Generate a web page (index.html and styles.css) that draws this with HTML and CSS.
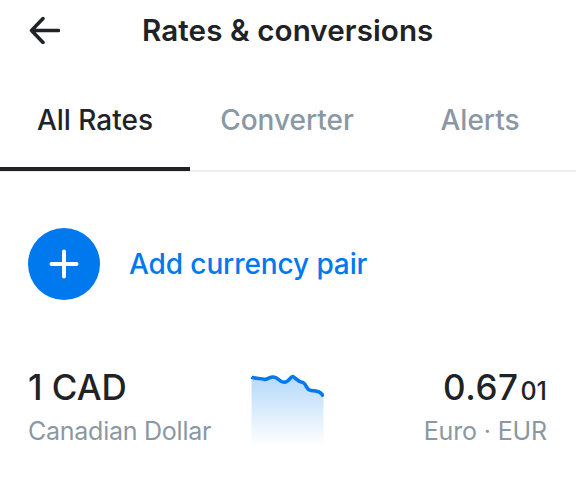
FILE: index.html
```html
<!DOCTYPE html>
<html lang="en">
<head>
    <meta charset="UTF-8">
    <meta name="viewport" content="width=device-width, initial-scale=1.0">
    <title>Rates &amp; conversions</title>
    <link rel="stylesheet" href="styles.css">
</head>
<body>
    <header class="header">
        <svg class="back" width="32" height="28" viewBox="0 0 32 28">
            <path d="M15 2.5 L3.5 14.5 L15 26.5 M3.5 14.5 H30.7" />
        </svg>
        <h1 class="title">Rates &amp; conversions</h1>
    </header>

    <nav class="tabs">
        <a class="tab active">All Rates</a>
        <a class="tab converter">Converter</a>
        <a class="tab alerts">Alerts</a>
    </nav>

    <main class="content">
        <div class="add-pair">
            <svg class="add-icon" width="72" height="72" viewBox="0 0 72 72">
                <circle cx="36" cy="36" r="36" />
                <path d="M36 23.5 V48.5 M23.5 36 H48.5" />
            </svg>
            <span class="add-label">Add currency pair</span>
        </div>

        <div class="rate">
            <div class="from">
                <div class="amount">1 CAD</div>
                <div class="currency dollar">Canadian Dollar</div>
            </div>
            <svg class="chart" width="73" height="76" viewBox="0 0 73 76">
                <defs>
                    <linearGradient id="fade" x1="0" y1="0" x2="0" y2="1">
                        <stop offset="0" stop-color="#b5d9fa" />
                        <stop offset="0.95" stop-color="#ffffff" />
                    </linearGradient>
                </defs>
                <path class="area" d="M0.5 4 C4 6.3 9 4.8 14 6.5 C18 5.5 19 3.8 22.5 4 C28 4.5 28 9.2 33 9.2 C39 9 38.5 3.5 42 3.5 C45 5 46 8.5 52 9.5 C56 11.5 55 17.5 60 17.5 C67 17.8 70 19 72.5 23.5 V76 H0.5 Z" />
                <path class="line" d="M0.5 4 C4 6.3 9 4.8 14 6.5 C18 5.5 19 3.8 22.5 4 C28 4.5 28 9.2 33 9.2 C39 9 38.5 3.5 42 3.5 C45 5 46 8.5 52 9.5 C56 11.5 55 17.5 60 17.5 C67 17.8 70 19 72.5 23.5" />
            </svg>
            <div class="to">
                <div class="amount">0.67<span class="small">01</span></div>
                <div class="currency euro">Euro · EUR</div>
            </div>
        </div>
    </main>
</body>
</html>
```
FILE: styles.css
```css
body {
    margin: 0;
    background-color: #fff;
    color: #1f2326;
    font-family: Inter, "Liberation Sans", sans-serif;
}

.header {
    display: flex;
    align-items: center;
    height: 60px;
    padding-left: 28px;
}

.back {
    fill: none;
    stroke: #1f2326;
    stroke-width: 3.5px;
    stroke-linecap: round;
    stroke-linejoin: round;
}

.title {
    margin: 0 0 0 82px;
    font-size: 29.6px;
    line-height: 36px;
    font-weight: 600;
    letter-spacing: 0.08px;
    white-space: nowrap;
}

.tabs {
    display: flex;
    height: 110px;
    border-bottom: 2px solid #ebebf2;
}

.tab {
    box-sizing: border-box;
    width: 194px;
    height: 110px;
    padding-top: 42px;
    text-align: center;
    font-size: 28px;
    line-height: 36px;
    font-weight: 500;
    color: #8b98a2;
}

.tab.alerts {
    width: 192px;
}

.tab.active {
    width: 190px;
    height: 111px;
    color: #1f2326;
    border-bottom: 4px solid #1f2326;
}

.content {
    padding: 56px 29px 0 28px;
}

.add-pair {
    display: flex;
    align-items: center;
    gap: 29px;
}

.add-icon circle {
    fill: #0078ee;
}

.add-icon path {
    fill: none;
    stroke: #fff;
    stroke-width: 4px;
    stroke-linecap: round;
}

.add-label {
    font-size: 28px;
    font-weight: 500;
    letter-spacing: -0.1px;
    color: #0078ee;
}

.rate {
    display: flex;
    margin-top: 66px;
}

.from {
    width: 223px;
    white-space: nowrap;
}

.to {
    flex: 1;
    text-align: right;
}

.amount {
    height: 42px;
    font-size: 35px;
    line-height: 42px;
    font-weight: 500;
}

.to .amount {
    letter-spacing: 0.5px;
}

.small {
    margin-left: 2px;
    font-size: 25px;
    line-height: 1;
    letter-spacing: 0;
}

.currency {
    margin-top: 8px;
    font-size: 25px;
    line-height: 30px;
    color: #8b98a2;
}

.currency.dollar {
    letter-spacing: -0.25px;
}

.currency.euro {
    letter-spacing: -0.15px;
}

.chart {
    margin-top: 7px;
}

.chart .area {
    fill: url(#fade);
}

.chart .line {
    fill: none;
    stroke: #0078ee;
    stroke-width: 3.6px;
}
```
